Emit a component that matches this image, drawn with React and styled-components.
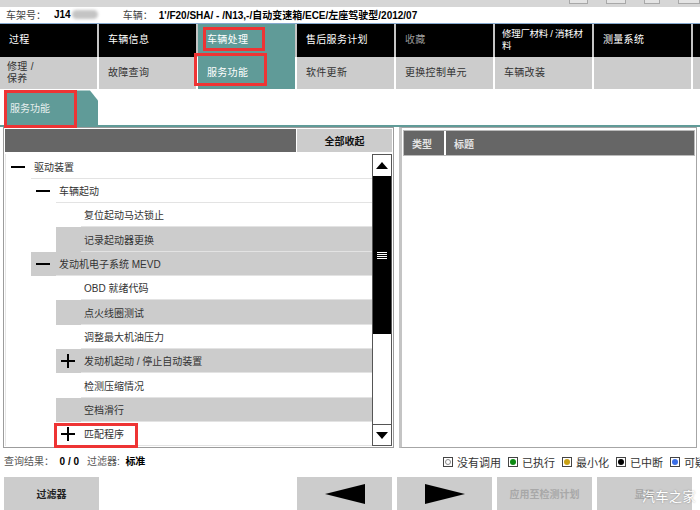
import React from 'react'
import styled, { createGlobalStyle } from 'styled-components'

const GlobalStyle = createGlobalStyle`
  body {
    margin: 0;
    font-family: "Liberation Sans", "Noto Sans CJK SC", sans-serif;
    background: #ffffff;
  }
`

const TEAL = '#609b98'

const Page = styled.div`
  position: relative;
  width: 700px;
  height: 510px;
  overflow: hidden;
  display: flex;
  flex-direction: column;
  background: #fff;
`

const TitleStrip = styled.div`
  height: 7px;
  background: #d6d6d6;
  display: flex;
  justify-content: flex-end;
  align-items: flex-end;
  gap: 18px;
  padding: 0 0 3px 0;
  box-sizing: border-box;
  overflow: hidden;
`

const WinBtn = styled.div`
  width: ${p => p.$w}px;
  height: 12px;
  flex: none;
  border: 1px solid #a8a8a8;
  background: #e4e4e4;
  box-sizing: border-box;
`

const InfoBar = styled.div`
  height: 16px;
  border-bottom: 1px solid #86a9cf;
  display: flex;
  align-items: center;
  padding-left: 6px;
  font-size: 10px;
  color: #444;
  white-space: nowrap;
`

const Label = styled.span`
  color: #444;
  margin-right: ${p => p.$gap || 8}px;
`

const Value = styled.span`
  color: #000;
  font-weight: bold;
`

const Blur = styled.span`
  display: inline-block;
  width: 26px;
  height: 9px;
  margin: 0 25px 0 1px;
  border-radius: 5px;
  background: #c4c4c4;
  filter: blur(1.5px);
`

const NavRow = styled.div`
  display: grid;
  grid-template-columns: repeat(7, 97px) 1fr;
  column-gap: 2px;
  height: ${p => p.$h}px;
  background: ${p => p.$sep};
`

const NavCell = styled.div`
  position: relative;
  display: flex;
  align-items: center;
  padding-left: ${p => p.$pad || 9}px;
  font-size: ${p => (p.$tight ? 9.5 : 10)}px;
  line-height: 12px;
  letter-spacing: ${p => (p.$tight ? -0.3 : 0.3)}px;
  white-space: nowrap;
  background: ${p => (p.$active ? TEAL : p.$bg)};
  color: ${p => (p.$active ? '#fff' : p.$fg)};
`

const RedBox = styled.div`
  position: absolute;
  left: ${p => p.$l}px;
  top: ${p => p.$t}px;
  width: ${p => p.$w}px;
  height: ${p => p.$h}px;
  border: 3px solid #ee3434;
  box-sizing: border-box;
  pointer-events: none;
`

const TabArea = styled.div`
  height: 37px;
  display: flex;
  align-items: flex-end;
  padding-left: 6px;
  border-bottom: 2px solid ${TEAL};
`

const Tab = styled.div`
  position: relative;
  width: 92px;
  height: 35px;
  background: ${TEAL};
  clip-path: polygon(0 0, calc(100% - 8px) 0, 100% 10px, 100% 100%, 0 100%);
  color: #e8f0ef;
  font-size: 10px;
  display: flex;
  align-items: center;
  padding-left: 4px;
  box-sizing: border-box;
`

const TabFrame = styled.div`
  position: relative;
`

const Main = styled.div`
  height: 321px;
  display: flex;
  gap: 5px;
  padding: 0 3px;
`

const LeftPanel = styled.div`
  width: 391px;
  box-sizing: border-box;
  border: 1px solid #9c9c9c;
  padding: 1px;
  display: flex;
  flex-direction: column;
  gap: 2px;
`

const PanelHeader = styled.div`
  height: 23px;
  flex: none;
  display: flex;
`

const DarkFill = styled.div`
  flex: 1;
  background: #666;
`

const CollapseBtn = styled.div`
  width: 95px;
  background: #cccccc;
  display: flex;
  align-items: center;
  justify-content: center;
  font-size: 10px;
  font-weight: bold;
  color: #111;
  border-left: 1px solid #fff;
`

const TreeWrap = styled.div`
  flex: 1;
  display: flex;
  min-height: 0;
`

const Tree = styled.div`
  flex: 1;
  display: flex;
  flex-direction: column;
  border-left: 1px solid #e6e6e6;
`

const Row = styled.div`
  position: relative;
  height: 24.33px;
  flex: none;
  display: flex;
  margin-left: ${p => p.$level * 25}px;
  background: ${p => (p.$shade ? '#cccccc' : '#ffffff')};
`

const IconCell = styled.div`
  width: 25px;
  flex: none;
  display: flex;
  align-items: center;
  padding-left: 5px;
  box-sizing: border-box;
`

const RowLabel = styled.div`
  flex: 1;
  display: flex;
  align-items: center;
  padding-left: 3px;
  font-size: 10px;
  color: #333;
  border-bottom: 1px solid #e3e3e3;
`

const Scrollbar = styled.div`
  width: 20px;
  display: flex;
  flex-direction: column;
  border: 1px solid #555;
  box-sizing: border-box;
  background: #fff;
`

const ScrollBtn = styled.div`
  height: ${p => p.$h}px;
  flex: none;
  display: flex;
  align-items: center;
  justify-content: center;
  background: #fff;
  border-top: ${p => (p.$top ? '1px solid #555' : 'none')};
`

const Thumb = styled.div`
  height: 158px;
  flex: none;
  background: #000;
  display: flex;
  flex-direction: column;
  align-items: center;
  justify-content: center;
  gap: 1px;
`

const Track = styled.div`
  flex: 1;
  background: #fff;
`

const Grip = styled.div`
  width: 10px;
  height: 1px;
  background: #fff;
`

const RightPanel = styled.div`
  flex: 1;
  box-sizing: border-box;
  border: 1px solid #a6a6a6;
  border-left: 3px solid #c4c4c4;
  padding: 2px 1px;
`

const TableHead = styled.div`
  height: 24px;
  display: grid;
  grid-template-columns: 40px 1fr;
  column-gap: 2px;
  background: #fff;
  border: 1px solid #bbb;
`

const HeadCell = styled.div`
  background: #666;
  color: #e4e4e4;
  font-size: 10px;
  font-weight: bold;
  display: flex;
  align-items: center;
  padding-left: ${p => p.$pad}px;
`

const StatusRow = styled.div`
  height: 28px;
  display: flex;
  align-items: center;
  justify-content: space-between;
  padding-left: 4px;
  font-size: 10px;
  color: #555;
  white-space: nowrap;
`

const StatusLeft = styled.div`
  display: flex;
  gap: 8px;
  margin-top: -4px;
`

const Legend = styled.div`
  display: flex;
  gap: 7px;
  font-size: 11px;
  color: #333;
  margin-right: -6px;
`

const LegendItem = styled.div`
  display: flex;
  align-items: center;
  gap: 4px;
`

const LegendBox = styled.span`
  width: 10px;
  height: 10px;
  box-sizing: border-box;
  border: 1px solid #444;
  background: #fff;
  display: flex;
  align-items: center;
  justify-content: center;
`

const Dot = styled.span`
  width: 6px;
  height: 6px;
  border-radius: 50%;
  background: ${p => p.$c};
  border: ${p => (p.$c === '#fff' ? '1px solid #888' : 'none')};
  box-sizing: border-box;
`

const ButtonRow = styled.div`
  height: 33px;
  display: flex;
  gap: 5px;
  padding-left: 4px;
  margin-top: 1px;
`

const Button = styled.div`
  width: 95px;
  flex: none;
  background: #cccccc;
  display: flex;
  align-items: center;
  justify-content: center;
  font-size: 10px;
  font-weight: bold;
  color: ${p => (p.$disabled ? '#a8a8a8' : '#222')};
`

const Spacer = styled.div`
  width: 188px;
  flex: none;
`

const Watermark = styled.div`
  position: absolute;
  right: 4px;
  bottom: 5px;
  font-size: 13px;
  color: #fff;
  text-shadow: 0 0 2px rgba(0, 0, 0, 0.35);
  letter-spacing: 0.5px;
`

const Minus = () => (
  <svg width="14" height="14" viewBox="0 0 14 14">
    <rect x="0" y="6" width="14" height="2" fill="#000" />
  </svg>
)

const Plus = () => (
  <svg width="14" height="14" viewBox="0 0 14 14">
    <rect x="0" y="6" width="14" height="2" fill="#000" />
    <rect x="6" y="0" width="2" height="14" fill="#000" />
  </svg>
)

const UpArrow = () => (
  <svg width="12" height="7" viewBox="0 0 12 7"><polygon points="6,0 12,7 0,7" fill="#000" /></svg>
)
const DownArrow = () => (
  <svg width="12" height="7" viewBox="0 0 12 7"><polygon points="0,0 12,0 6,7" fill="#000" /></svg>
)

const BigArrow = ({ dir }) => (
  <svg width="40" height="20" viewBox="0 0 40 20">
    {dir === 'left'
      ? <polygon points="0,10 40,0 40,20" fill="#000" />
      : <polygon points="0,0 40,10 0,20" fill="#000" />}
  </svg>
)

const nav1 = [
  { t: '过程' },
  { t: '车辆信息' },
  { t: '车辆处理', active: true, box: { l: 5, t: 3, w: 62, h: 24 } },
  { t: '售后服务计划' },
  { t: '收藏', fg: '#9a9a9a' },
  { t: <>修理厂材料 / 消耗材<br />料</>, pad: 7, tight: true },
  { t: '测量系统' },
  { t: '' },
]

const nav2 = [
  { t: <>修理 /<br />保养</>, pad: 7 },
  { t: '故障查询' },
  { t: '服务功能', active: true, box: { l: -4, t: -4, w: 73, h: 33 } },
  { t: '软件更新' },
  { t: '更换控制单元' },
  { t: '车辆改装' },
  { t: '' },
  { t: '' },
]

const tree = [
  { t: '驱动装置', level: 0, icon: 'minus' },
  { t: '车辆起动', level: 1, icon: 'minus' },
  { t: '复位起动马达锁止', level: 2 },
  { t: '记录起动器更换', level: 2, shade: true },
  { t: '发动机电子系统 MEVD', level: 1, icon: 'minus', shade: true },
  { t: 'OBD 就绪代码', level: 2 },
  { t: '点火线圈测试', level: 2, shade: true },
  { t: '调整最大机油压力', level: 2 },
  { t: '发动机起动 / 停止自动装置', level: 2, icon: 'plus', shade: true },
  { t: '检测压缩情况', level: 2 },
  { t: '空档滑行', level: 2, shade: true },
  { t: '匹配程序', level: 2, icon: 'plus', box: true },
]

const legend = [
  { t: '没有调用', c: '#fff' },
  { t: '已执行', c: '#0c8a12' },
  { t: '最小化', c: '#c9a114' },
  { t: '已中断', c: '#000' },
  { t: '可疑', c: '#3b6ee6' },
]

const App = () => {
  return (
    <Page>
      <GlobalStyle />
      <TitleStrip>
        <WinBtn $w={19} />
        <WinBtn $w={20} />
        <WinBtn $w={16} />
        <WinBtn $w={22} />
      </TitleStrip>
      <InfoBar>
        <Label $gap={8}>车架号：</Label>
        <Value>J14</Value>
        <Blur />
        <Label $gap={6}>车辆：</Label>
        <Value>1'/F20/SHA/ - /N13,-/自动变速箱/ECE/左座驾驶型/2012/07</Value>
      </InfoBar>
      <NavRow $h={33} $sep="#c4c4c4">
        {nav1.map((c, i) => (
          <NavCell key={i} $bg="#000" $fg={c.fg || '#fff'} $active={c.active} $pad={c.pad} $tight={c.tight}>
            {c.t}
            {c.box && <RedBox $l={c.box.l} $t={c.box.t} $w={c.box.w} $h={c.box.h} />}
          </NavCell>
        ))}
      </NavRow>
      <NavRow $h={32} $sep="#ffffff">
        {nav2.map((c, i) => (
          <NavCell key={i} $bg="#cccccc" $fg="#333" $active={c.active} $pad={c.pad}>
            {c.t}
            {c.box && <RedBox $l={c.box.l} $t={c.box.t} $w={c.box.w} $h={c.box.h} />}
          </NavCell>
        ))}
      </NavRow>
      <TabArea>
        <TabFrame>
          <Tab>服务功能</Tab>
          <RedBox $l={-2} $t={0} $w={73} $h={38} />
        </TabFrame>
      </TabArea>
      <Main>
        <LeftPanel>
          <PanelHeader>
            <DarkFill />
            <CollapseBtn>全部收起</CollapseBtn>
          </PanelHeader>
          <TreeWrap>
            <Tree>
              {tree.map((r, i) => (
                <Row key={i} $level={r.level} $shade={r.shade}>
                  <IconCell>
                    {r.icon === 'minus' && <Minus />}
                    {r.icon === 'plus' && <Plus />}
                  </IconCell>
                  <RowLabel>{r.t}</RowLabel>
                  {r.box && <RedBox $l={-2} $t={1} $w={84} $h={25} />}
                </Row>
              ))}
            </Tree>
            <Scrollbar>
              <ScrollBtn $h={21}><UpArrow /></ScrollBtn>
              <Thumb>
                <Grip /><Grip /><Grip /><Grip />
              </Thumb>
              <Track />
              <ScrollBtn $h={20} $top><DownArrow /></ScrollBtn>
            </Scrollbar>
          </TreeWrap>
        </LeftPanel>
        <RightPanel>
          <TableHead>
            <HeadCell $pad={8}>类型</HeadCell>
            <HeadCell $pad={8}>标题</HeadCell>
          </TableHead>
        </RightPanel>
      </Main>
      <StatusRow>
        <StatusLeft>
          <span>查询结果： <Value>&nbsp;0 / 0</Value></span>
          <span>过滤器: &nbsp;<Value>标准</Value></span>
        </StatusLeft>
        <Legend>
          {legend.map(l => (
            <LegendItem key={l.t}>
              <LegendBox><Dot $c={l.c} /></LegendBox>
              {l.t}
            </LegendItem>
          ))}
        </Legend>
      </StatusRow>
      <ButtonRow>
        <Button>过滤器</Button>
        <Spacer />
        <Button><BigArrow dir="left" /></Button>
        <Button><BigArrow dir="right" /></Button>
        <Button $disabled>应用至检测计划</Button>
        <Button $disabled>显示</Button>
      </ButtonRow>
      <Watermark>汽车之家</Watermark>
    </Page>
  )
}

export default App
